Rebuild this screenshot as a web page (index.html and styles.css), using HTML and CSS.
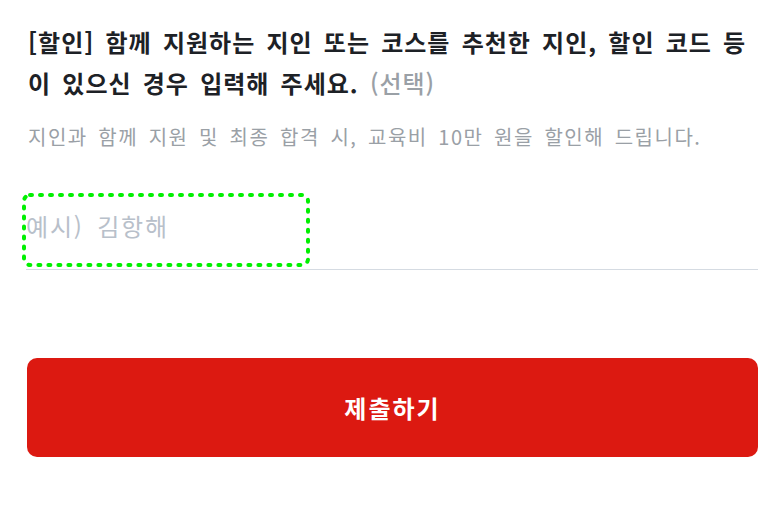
FILE: index.html
```html
<!DOCTYPE html>
<html lang="ko">
<head>
    <meta charset="UTF-8">
    <meta name="viewport" content="width=device-width, initial-scale=1.0">
    <title>할인 코드 입력</title>
    <link rel="stylesheet" href="styles.css">
</head>
<body>
    <div class="container">
        <h2 class="question">[할인] 함께 지원하는 지인 또는 코스를 추천한 지인, 할인 코드 등이 있으신 경우 입력해 주세요. <span class="optional">(선택)</span></h2>
        <p class="hint">지인과 함께 지원 및 최종 합격 시, 교육비 10만 원을 할인해 드립니다.</p>

        <div class="field">
            <input type="text" class="text-field" placeholder="예시) 김항해">
            <svg class="focus-ring" width="288" height="74" viewBox="0 0 288 74">
                <rect x="2" y="2" width="284" height="70" rx="6" ry="6" fill="none" stroke="#00f000" stroke-width="4" stroke-dasharray="2 8" stroke-linecap="round"/>
            </svg>
        </div>

        <button class="submit">제출하기</button>
    </div>
</body>
</html>
```

FILE: styles.css
```css
:root {
    --text: #1d2126;
    --muted: #9aa0a6;
    --placeholder: #b8c0ca;
    --line: #d5dbe2;
    --red: #dc1911;
}

* {
    margin: 0;
    padding: 0;
    box-sizing: border-box;
}

body {
    font-family: 'Noto Sans CJK KR', 'Noto Sans', sans-serif;
    background: #fff;
    color: var(--text);
}

.container {
    padding: 21px 22px 0 28px;
}

.question {
    font-size: 24px;
    font-weight: 700;
    line-height: 41px;
    letter-spacing: 1px;
    word-spacing: 3.5px;
}

.optional {
    color: var(--muted);
    font-weight: 500;
}

.hint {
    margin-top: 21px;
    font-size: 20px;
    line-height: 26px;
    color: var(--muted);
    letter-spacing: 1.5px;
    word-spacing: 3.5px;
}

.field {
    position: relative;
    margin: 51px 0 0 -2px;
}

.text-field {
    display: block;
    width: 100%;
    border: none;
    border-bottom: 1px solid var(--line);
    padding: 10px 0 28px;
    font-family: inherit;
    font-size: 24px;
    line-height: 30px;
    letter-spacing: 1.8px;
    word-spacing: 5px;
    color: var(--text);
    outline: none;
}

.text-field::placeholder {
    color: var(--placeholder);
}

.focus-ring {
    position: absolute;
    left: -4px;
    top: -8px;
    pointer-events: none;
}

.submit {
    display: block;
    width: calc(100% + 1px);
    height: 99px;
    margin: 88px 0 0 -1px;
    border: none;
    border-radius: 10px;
    background: var(--red);
    color: #fff;
    font-family: inherit;
    font-size: 24px;
    font-weight: 700;
    letter-spacing: 2px;
    cursor: pointer;
}
```
